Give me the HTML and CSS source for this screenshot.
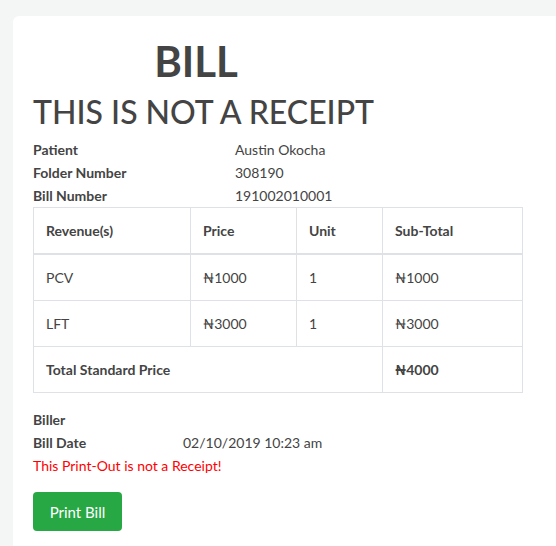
FILE: index.html
```html
<!DOCTYPE html>
<html lang="en">
<head>
<meta charset="utf-8">
<title>Bill</title>
<link rel="stylesheet" href="styles.css">
</head>
<body>
<div class="card">
  <div class="head">
    <h1 class="title">BILL</h1>
  </div>
  <h2 class="subtitle">THIS IS NOT A RECEIPT</h2>
  <div class="info">
    <div class="info-row"><span class="label">Patient</span><span class="value">Austin Okocha</span></div>
    <div class="info-row"><span class="label">Folder Number</span><span class="value">308190</span></div>
    <div class="info-row"><span class="label">Bill Number</span><span class="value">191002010001</span></div>
  </div>
  <table class="bill">
    <colgroup>
      <col class="c1"><col class="c2"><col class="c3"><col class="c4">
    </colgroup>
    <thead>
      <tr><th>Revenue(s)</th><th>Price</th><th>Unit</th><th>Sub-Total</th></tr>
    </thead>
    <tbody>
      <tr><td>PCV</td><td>₦1000</td><td>1</td><td>₦1000</td></tr>
      <tr><td>LFT</td><td>₦3000</td><td>1</td><td>₦3000</td></tr>
      <tr class="total"><td colspan="3">Total Standard Price</td><td>₦4000</td></tr>
    </tbody>
  </table>
  <div class="meta">
    <div class="meta-row"><span class="label">Biller</span><span class="value"></span></div>
    <div class="meta-row"><span class="label">Bill Date</span><span class="value">02/10/2019 10:23 am</span></div>
  </div>
  <p class="warn">This Print-Out is not a Receipt!</p>
  <button class="btn" type="button">Print Bill</button>
</div>
</body>
</html>
```
FILE: styles.css
```css
html, body {
  margin: 0;
  padding: 0;
  height: 100%;
  overflow: hidden;
}
body {
  background: #f4f5f5;
  font-family: "Lato", "DejaVu Sans", sans-serif;
  font-size: 14px;
  color: #444;
}
.card {
  box-sizing: border-box;
  background: #fff;
  margin: 16px -20px 0 13px;
  border-radius: 6px 0 0 0;
  padding: 20px;
  min-height: calc(100% - 16px);
}
.head {
  width: 326px;
  text-align: center;
}
.title {
  margin: 0;
  font-size: 42px;
  line-height: 50px;
  font-weight: 700;
  color: #444;
}
.subtitle {
  margin: 7px 0 7px 0;
  font-size: 32px;
  line-height: 38px;
  font-weight: 500;
  color: #444;
}
.info-row {
  display: grid;
  grid-template-columns: 202px auto;
  line-height: 23px;
}
.label {
  font-weight: 700;
}
.bill {
  width: 489px;
  border-collapse: collapse;
  table-layout: fixed;
  margin-bottom: 15px;
}
.c1 { width: 157px; }
.c2 { width: 106px; }
.c3 { width: 86px; }
.c4 { width: 140px; }
.bill th, .bill td {
  border: 1px solid #dee2e6;
  padding: 12px 12px;
  line-height: 21px;
  text-align: left;
}
.bill th {
  font-weight: 700;
  border-bottom-width: 2px;
}
.bill .total td {
  font-weight: 700;
}
.meta-row {
  display: grid;
  grid-template-columns: 150px auto;
  line-height: 23px;
}
.warn {
  margin: 0 0 15px 0;
  line-height: 23px;
  color: #ff0000;
}
.btn {
  display: block;
  width: 89px;
  height: 39px;
  background: #28a745;
  border: none;
  border-radius: 4px;
  color: #fff;
  font-family: inherit;
  font-size: 15px;
  padding: 0;
}
```
